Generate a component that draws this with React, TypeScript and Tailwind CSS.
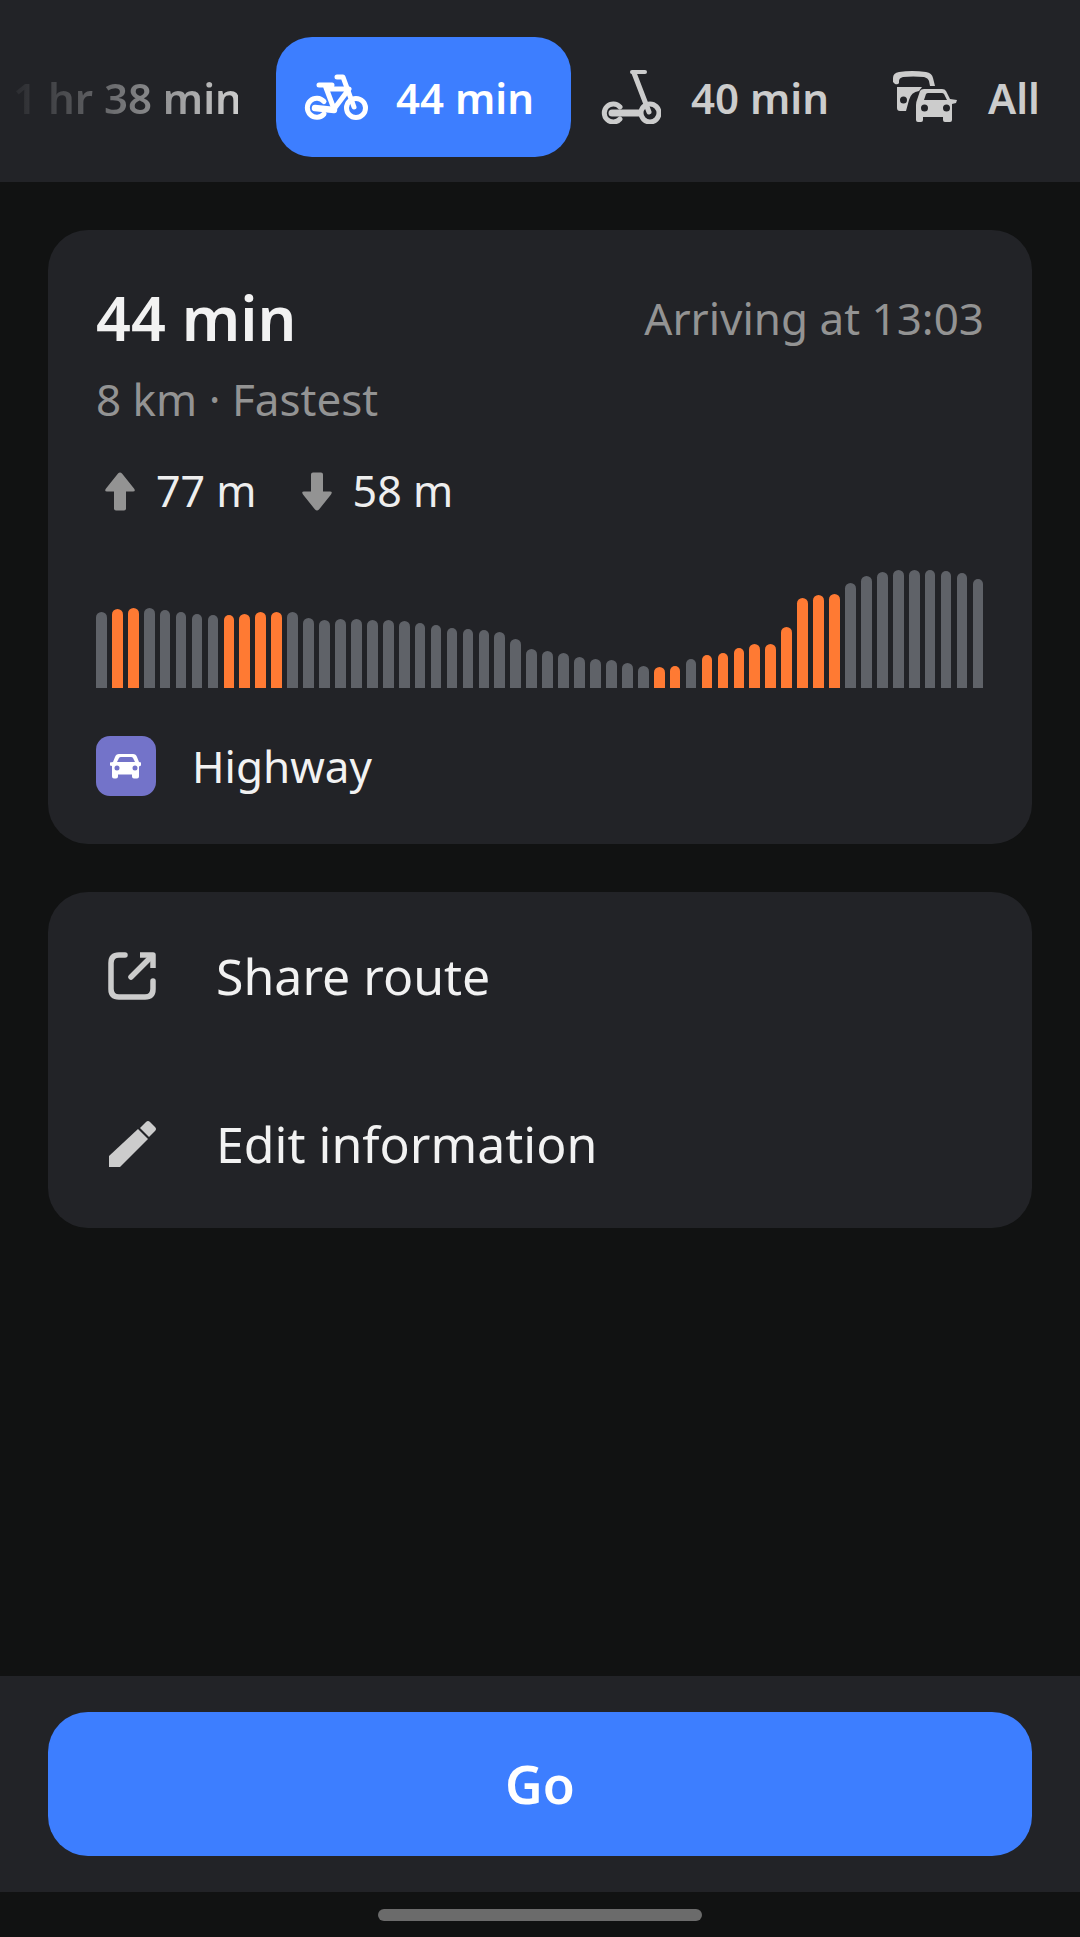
const bars = [
  76, 79, 80, 80, 78, 76, 74, 73, 73, 74, 76, 76, 76, 70, 68, 69, 69, 68, 68, 67, 65, 63, 60, 59, 58, 56, 49, 39,
  37, 35, 31, 29, 28, 25, 22, 21, 22, 29, 33, 35, 40, 44, 44, 61, 90, 93, 94, 105, 112, 116, 118, 118, 118, 117, 115, 109,
];
const orange = [1, 2, 8, 9, 10, 11, 35, 36, 38, 39, 40, 41, 42, 43, 44, 45, 46];

const BikeIcon = () => (
  <svg width="64" height="46" viewBox="0 0 64 46" fill="none" stroke="#fff" strokeWidth="5" strokeLinecap="round" strokeLinejoin="round">
    <path d="M20 27.500a9.500 9.500 0 1 0 0 12.500" />
    <circle cx="52" cy="34" r="9.500" />
    <path d="M33 3h6l11 30" />
    <path d="M15 11h13M21 11l9 24 15-20H25" />
    <path d="M11 34l19 2" strokeWidth="6.500" />
  </svg>
);

const ScooterIcon = () => (
  <svg width="60" height="54" viewBox="0 0 60 54" fill="none" stroke="#ccc" strokeWidth="5" strokeLinecap="round" strokeLinejoin="round">
    <path d="M31 2h13" strokeWidth="4" />
    <path d="M33 3l15 39" />
    <path d="M19 37a9 9 0 1 0 0 12" />
    <circle cx="49" cy="43" r="9" />
    <path d="M11 43h27" strokeWidth="7" />
  </svg>
);

const TransportIcon = () => (
  <svg width="66" height="54" viewBox="0 0 66 54" fill="#ccc">
    <path d="M1 12V8q0-5 6-6 13-2 27 0 6 1 7 6l2 8h-5l-1-5q-1-3-5-4-11-1-21 0-4 1-4 4v2q-1 2-4 1z" />
    <path d="M5 17h25l-3 4q-8 1-10 9l-3 11H8q-3 0-3-3zM8 30a3.500 3.500 0 1 0 7 0a3.500 3.500 0 1 0-7 0z" fillRule="evenodd" />
    <path fillRule="evenodd" transform="translate(4 0)" d="M24 21q1-2 4-2h18q3 0 4 2l4 8 7 1-1 3-4 1v16q0 2-2 2h-5q-2 0-2-2v-3H27v3q0 2-2 2h-3q-2 0-2-2V35q0-3 1-5zM28 30h23l-3-6q-1-1-2-1H32q-1 0-2 1zM25 38a3.500 3.500 0 1 0 7 0a3.500 3.500 0 1 0-7 0zM47 38a3.500 3.500 0 1 0 7 0a3.500 3.500 0 1 0-7 0z" />
  </svg>
);

const ArrowUp = () => (
  <svg width="30" height="39" viewBox="0 0 30 39" fill="#939393">
    <path d="M13 1.500q2-2 4 0l12 15q2 3-1 3h-7v17q0 2-2 2h-8q-2 0-2-2v-17H2q-3 0-1-3z" />
  </svg>
);

const ArrowDown = () => (
  <svg width="30" height="39" viewBox="0 0 30 39" fill="#939393">
    <path d="M13 37.500q2 2 4 0l12-15q2-3-1-3h-7v-17q0-2-2-2h-8q-2 0-2 2v17H2q-3 0-1 3z" />
  </svg>
);

const CarIcon = () => (
  <svg width="32" height="26" viewBox="0 0 32 26" fill="#fff">
    <path fillRule="evenodd" d="M5 4q1-3 4-3h14q3 0 4 3l2 5 2 .500v3l-2 1v10q0 2-2 2h-3q-2 0-2-2v-2H8v2q0 2-2 2H4q-2 0-2-2V13L0 12.500v-3L3 9zM7 9h18l-2-4q-.500-1-2-1H11q-1.500 0-2 1zM4.500 15a2.500 2.500 0 1 0 5 0a2.500 2.500 0 1 0-5 0zM22.500 15a2.500 2.500 0 1 0 5 0a2.500 2.500 0 1 0-5 0z" />
  </svg>
);

const ShareIcon = () => (
  <svg width="48" height="48" viewBox="0 0 48 48" fill="none" stroke="#ccc" strokeWidth="5.500" strokeLinecap="round" strokeLinejoin="round">
    <path d="M17 3H11q-8 0-8 8v26q0 8 8 8h26q8 0 8-8v-8" />
    <path d="M23 25L41 7" />
    <path d="M32 3h13v13" strokeLinecap="butt" />
  </svg>
);

const PencilIcon = () => (
  <svg width="48" height="48" viewBox="0 0 48 48" fill="#ccc">
    <path d="M1 36L30 9l10 10L12 47H1z" />
    <path d="M32 8l6-6q2-2 4 0l5 5q2 2 0 4l-6 6z" />
  </svg>
);

export default function App() {
  return (
    <div className="flex h-[1937px] w-[1080px] flex-col overflow-hidden bg-[#111212] font-['Noto_Sans',sans-serif] text-white">
      {/* Transport tabs */}
      <div className="flex h-[182px] items-center whitespace-nowrap bg-[#222327] pt-[12px] pl-[13px] text-[42px] font-semibold text-[#ccc]">
        <span className="w-[225px] bg-linear-to-r from-[#2a2b2f] to-[#ccc] bg-clip-text text-transparent">1 hr 38 min</span>
        <div className="ml-[38px] flex h-[120px] w-[295px] shrink-0 items-center gap-[28px] rounded-[36px] bg-[#3d7eff] pl-[28px] text-white">
          <BikeIcon />
          <span>44 min</span>
        </div>
        <div className="ml-[30px] flex items-center gap-[30px]">
          <ScooterIcon />
          <span>40 min</span>
        </div>
        <div className="ml-[63px] flex items-center gap-[30px]">
          <TransportIcon />
          <span>All</span>
        </div>
      </div>

      <div className="flex flex-1 flex-col gap-12 px-12 pt-12">
        {/* Route summary */}
        <div className="rounded-[40px] bg-[#222327] px-12 pt-[45px] pb-12">
          <div className="flex h-[86px] items-center justify-between">
            <span className="text-[61px] font-semibold text-[#f2f2f2]">44 min</span>
            <span className="text-[44px] text-[#939393]">Arriving at 13:03</span>
          </div>
          <div className="mt-[10px] text-[44px] leading-[56px] text-[#939393]">8 km · Fastest</div>
          <div className="mt-[36px] flex h-[56px] items-center text-[43px] leading-[56px] text-[#eee]">
            <div className="ml-[9px]"><ArrowUp /></div>
            <span className="ml-[21px]">77 m</span>
            <div className="ml-[45px]"><ArrowDown /></div>
            <span className="ml-[21px]">58 m</span>
          </div>
          <div className="mt-[51px] flex h-[118px] items-end justify-between">
            {bars.map((h, i) => (
              <div
                key={i}
                className={`w-[10.7px] rounded-t-full ${orange.includes(i) ? 'bg-[#ff7a33]' : 'bg-[#5f6268]'}`}
                style={{ height: h }}
              />
            ))}
          </div>
          <div className="mt-12 flex h-[60px] items-center gap-9">
            <div className="flex h-[60px] w-[60px] items-center justify-center rounded-[14px] bg-[#7373c9]">
              <CarIcon />
            </div>
            <span className="text-[44px] leading-[60px] text-[#f2f2f2]">Highway</span>
          </div>
        </div>

        {/* Actions */}
        <div className="rounded-[40px] bg-[#222327]">
          <div className="flex h-[168px] items-center gap-[60px] pl-[60px]">
            <ShareIcon />
            <span className="text-[50px] text-[#f2f2f2]">Share route</span>
          </div>
          <div className="flex h-[168px] items-center gap-[60px] pl-[60px]">
            <PencilIcon />
            <span className="text-[50px] text-[#f2f2f2]">Edit information</span>
          </div>
        </div>
      </div>

      {/* Go button */}
      <div className="bg-[#222327] px-12 py-9">
        <button className="flex h-[144px] w-full items-center justify-center rounded-[40px] bg-[#3d7eff] text-[52px] font-semibold">Go</button>
      </div>
      <div className="flex h-[45px] justify-center pt-[17px]">
        <div className="h-[12px] w-[324px] rounded-[6px] bg-[#6b6b6b]" />
      </div>
    </div>
  );
}
